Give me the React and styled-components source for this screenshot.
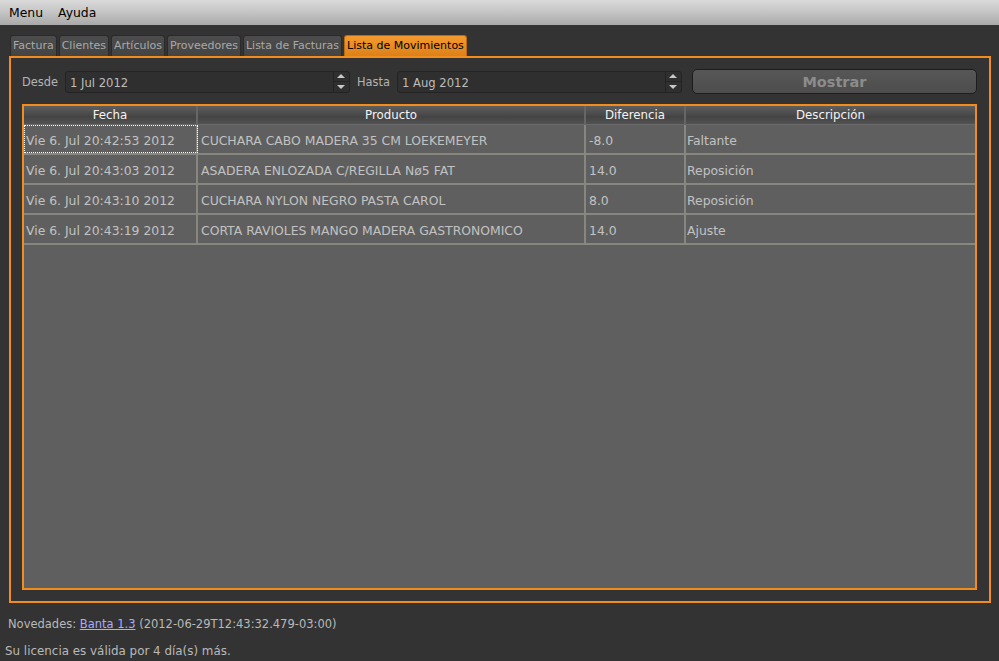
import React from "react";
import styled, { createGlobalStyle } from "styled-components";

const GlobalStyle = createGlobalStyle`
  html, body {
    margin: 0;
    padding: 0;
    background: #333333;
    font-family: "DejaVu Sans", "Liberation Sans", sans-serif;
    overflow: hidden;
  }
`;

const Window = styled.div`
  width: 999px;
  height: 661px;
  display: flex;
  flex-direction: column;
  background: #333333;
`;

const MenuBar = styled.div`
  height: 25px;
  display: flex;
  align-items: center;
  padding-left: 9px;
  gap: 15px;
  background: linear-gradient(#dadada, #c4c4c4 50%, #a9a9a9);
  font-size: 12.4px;
  color: #000;
`;

const Main = styled.div`
  padding: 10px 8px 0 9px;
`;

const TabBar = styled.div`
  display: flex;
  gap: 2px;
  padding-left: 1px;
  height: 21px;
`;

const Tab = styled.div`
  height: 21px;
  box-sizing: border-box;
  padding: 3px 2px 0 2px;
  border: 1px solid ${(p) => (p.active ? "#b86a10" : "#2a2a2a")};
  border-bottom: none;
  border-radius: 3px 3px 0 0;
  font-size: 11px;
  color: ${(p) => (p.active ? "#000" : "#a9a9a9")};
  background: ${(p) =>
    p.active ? "linear-gradient(#f49a2e, #dc8118)" : "linear-gradient(#4c4c4c, #444444)"};
  white-space: nowrap;
`;

const Panel = styled.div`
  height: 547px;
  box-sizing: border-box;
  border: 2px solid #f28c1c;
  padding: 11px 12px 11px 11px;
  display: flex;
  flex-direction: column;
  gap: 10px;
`;

const Controls = styled.div`
  display: flex;
  align-items: center;
  height: 25px;
`;

const Label = styled.span`
  font-size: 11.4px;
  color: #b4b4b4;
  margin: 0 7px 0 ${(p) => p.left || 0}px;
`;

const SpinBox = styled.div`
  width: 285px;
  height: 22px;
  box-sizing: border-box;
  border: 1px solid #232323;
  border-radius: 3px;
  background: #2f2f2f;
  display: flex;
`;

const SpinText = styled.div`
  flex: 1;
  padding: 4px 0 0 4px;
  font-size: 11.6px;
  color: #bdbdbd;
`;

const SpinButtons = styled.div`
  width: 15px;
  border-left: 1px solid #232323;
  display: flex;
  flex-direction: column;
`;

const Arrow = styled.div`
  flex: 1;
  display: flex;
  align-items: center;
  justify-content: center;
  border-top: ${(p) => (p.down ? "1px solid #232323" : "none")};
  &::after {
    content: "";
    border-left: 4px solid transparent;
    border-right: 4px solid transparent;
    ${(p) => (p.down ? "border-top" : "border-bottom")}: 4px solid #c8c8c8;
  }
`;

const Button = styled.button`
  margin-left: 10px;
  flex: 1;
  height: 25px;
  border: 1px solid #1d1d1d;
  border-radius: 5px;
  background: linear-gradient(#575757, #4d4d4d);
  color: #8c8c8c;
  font-family: "DejaVu Sans", sans-serif;
  font-weight: bold;
  font-size: 14.5px;
  padding: 0;
`;

const Table = styled.div`
  flex: 1;
  border: 2px solid #f28c1c;
  background: #5f5f5f;
  display: flex;
  flex-direction: column;
`;

const Grid = styled.div`
  display: grid;
  grid-template-columns: 174px 388px 100px 1fr;
`;

const HeaderRow = styled(Grid)`
  height: 18px;
  background: linear-gradient(#5e5e5e, #4b4b4b 45%, #444444 60%, #525252);
  border-bottom: 1px solid #6a6a6a;
`;

const HeadCell = styled.div`
  text-align: center;
  font-size: 11.8px;
  line-height: 19px;
  color: #f4f4f4;
  border-right: 2px solid #666666;
  &:last-child {
    border-right: none;
  }
`;

const Row = styled(Grid)`
  height: 30px;
  border-bottom: 2px solid #87877f;
  box-sizing: border-box;
`;

const Cell = styled.div`
  font-size: 12.4px;
  line-height: 28px;
  padding: 2px 0 0 ${(p) => p.pad || 3}px;
  color: #c2c2c2;
  white-space: nowrap;
  overflow: hidden;
  border-right: 2px solid #87877f;
  outline: ${(p) => (p.focus ? "1px dotted #ffffff" : "none")};
  outline-offset: -1px;
  &:last-child {
    border-right: none;
  }
`;

const Footer = styled.div`
  padding: 14px 0 0 0;
  display: flex;
  flex-direction: column;
  gap: 13px;
  color: #b9b9b9;
`;

const FooterLine = styled.div`
  padding-left: ${(p) => p.left}px;
  font-size: ${(p) => p.size}px;
`;

const Link = styled.a`
  color: #aaaaff;
  text-decoration: underline;
`;

const tabs = ["Factura", "Clientes", "Artículos", "Proveedores", "Lista de Facturas", "Lista de Movimientos"];

const rows = [
  ["Vie 6. Jul 20:42:53 2012", "CUCHARA CABO MADERA 35 CM LOEKEMEYER", "-8.0", "Faltante"],
  ["Vie 6. Jul 20:43:03 2012", "ASADERA ENLOZADA C/REGILLA Nø5 FAT", "14.0", "Reposición"],
  ["Vie 6. Jul 20:43:10 2012", "CUCHARA NYLON NEGRO PASTA CAROL", "8.0", "Reposición"],
  ["Vie 6. Jul 20:43:19 2012", "CORTA RAVIOLES MANGO MADERA GASTRONOMICO", "14.0", "Ajuste"],
];

const Spin = ({ value }) => (
  <SpinBox>
    <SpinText>{value}</SpinText>
    <SpinButtons>
      <Arrow />
      <Arrow down />
    </SpinButtons>
  </SpinBox>
);

export default function App() {
  return (
    <Window>
      <GlobalStyle />
      <MenuBar>
        <span>Menu</span>
        <span>Ayuda</span>
      </MenuBar>
      <Main>
        <TabBar>
          {tabs.map((t) => (
            <Tab key={t} active={t === "Lista de Movimientos"}>
              {t}
            </Tab>
          ))}
        </TabBar>
        <Panel>
          <Controls>
            <Label>Desde</Label>
            <Spin value="1 Jul 2012" />
            <Label left={7}>Hasta</Label>
            <Spin value="1 Aug 2012" />
            <Button>Mostrar</Button>
          </Controls>
          <Table>
            <HeaderRow>
              <HeadCell>Fecha</HeadCell>
              <HeadCell>Producto</HeadCell>
              <HeadCell>Diferencia</HeadCell>
              <HeadCell>Descripción</HeadCell>
            </HeaderRow>
            {rows.map((r, i) => (
              <Row key={i}>
                <Cell focus={i === 0} pad={2}>{r[0]}</Cell>
                <Cell>{r[1]}</Cell>
                <Cell>{r[2]}</Cell>
                <Cell pad={1}>{r[3]}</Cell>
              </Row>
            ))}
          </Table>
        </Panel>
      </Main>
      <Footer>
        <FooterLine left={8} size={11.5}>
          Novedades: <Link>Banta 1.3</Link> (2012-06-29T12:43:32.479-03:00)
        </FooterLine>
        <FooterLine left={5} size={11.9}>
          Su licencia es válida por 4 día(s) más.
        </FooterLine>
      </Footer>
    </Window>
  );
}
